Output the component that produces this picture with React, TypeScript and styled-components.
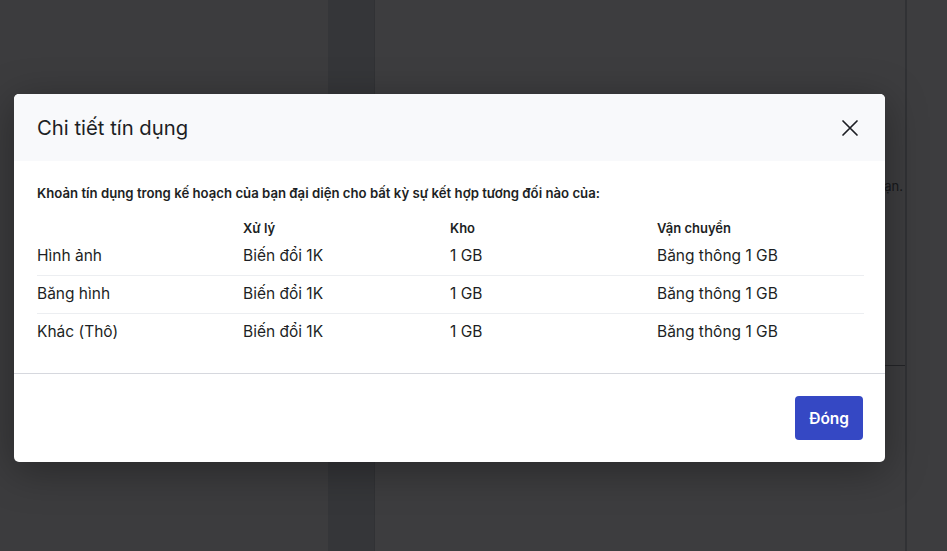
import React from 'react';
import styled, { createGlobalStyle } from 'styled-components';

const GlobalStyle = createGlobalStyle`
  html, body {
    margin: 0;
    padding: 0;
    height: 100%;
    overflow: hidden;
  }
  body {
    font-family: Inter, "Noto Sans", sans-serif;
    color: #1d1f24;
  }
  #root {
    height: 100%;
  }
`;

type Row = {
  name: string;
  processing: string;
  storage: string;
  delivery: string;
};

const rows: Row[] = [
  { name: 'Hình ảnh', processing: 'Biến đổi 1K', storage: '1 GB', delivery: 'Băng thông 1 GB' },
  { name: 'Băng hình', processing: 'Biến đổi 1K', storage: '1 GB', delivery: 'Băng thông 1 GB' },
  { name: 'Khác (Thô)', processing: 'Biến đổi 1K', storage: '1 GB', delivery: 'Băng thông 1 GB' },
];

function CloseIcon() {
  return (
    <svg width="18" height="18" viewBox="0 0 18 18" fill="none">
      <path d="M2 2L16 16M16 2L2 16" stroke="#1d1f24" strokeWidth="1.7" strokeLinecap="round" />
    </svg>
  );
}

export default function App() {
  return (
    <>
      <GlobalStyle />
      <Page>
        <LeftArea />
        <SideStrip />
        <MainArea>
          <MainText>ạn.</MainText>
          <MainRule />
        </MainArea>
        <RightArea />
        <Overlay>
          <Modal>
            <Header>
              <Title>Chi tiết tín dụng</Title>
              <CloseButton aria-label="Đóng">
                <CloseIcon />
              </CloseButton>
            </Header>
            <Body>
              <Intro>Khoản tín dụng trong kế hoạch của bạn đại diện cho bất kỳ sự kết hợp tương đối nào của:</Intro>
              <Table>
                <HeadRow>
                  <HeadCell />
                  <HeadCell>Xử lý</HeadCell>
                  <HeadCell>Kho</HeadCell>
                  <HeadCell>Vận chuyển</HeadCell>
                </HeadRow>
                {rows.map((r, i) => (
                  <DataRow key={r.name} $last={i === rows.length - 1}>
                    <Cell>{r.name}</Cell>
                    <Cell>{r.processing}</Cell>
                    <Cell>{r.storage}</Cell>
                    <Cell>{r.delivery}</Cell>
                  </DataRow>
                ))}
              </Table>
            </Body>
            <Footer>
              <PrimaryButton>Đóng</PrimaryButton>
            </Footer>
          </Modal>
        </Overlay>
      </Page>
    </>
  );
}

const Page = styled.div`
  position: relative;
  display: flex;
  width: 100%;
  height: 100%;
  background: #ffffff;
`;

const LeftArea = styled.div`
  width: 328px;
  background: #f9fafb;
`;

const SideStrip = styled.div`
  width: 46px;
  background: #d9dde0;
  border-right: 1px solid #c8cbce;
`;

const MainArea = styled.div`
  width: 530px;
  padding-top: 178px;
  border-right: 2px solid #c9ccd0;
  background: #ffffff;
`;

const MainText = styled.div`
  font-size: 13px;
  color: #55585d;
  text-align: right;
  padding-right: 2px;
`;

const MainRule = styled.div`
  margin-top: 171px;
  margin-left: auto;
  width: 40px;
  height: 1px;
  background: #8d9096;
`;

const RightArea = styled.div`
  flex: 1;
  background: #ffffff;
`;

const Overlay = styled.div`
  position: absolute;
  inset: 0;
  background: rgba(8, 8, 10, 0.785);
  padding: 94px 0 0 14px;
`;

const Modal = styled.div`
  width: 871px;
  background: #ffffff;
  border-radius: 5px;
  overflow: hidden;
  box-shadow: 0 8px 40px rgba(0, 0, 0, 0.35);
`;

const Header = styled.div`
  height: 67px;
  background: #f8f9fb;
  display: flex;
  align-items: center;
  justify-content: space-between;
  padding: 0 26px 0 23px;
  box-sizing: border-box;
`;

const Title = styled.h2`
  margin: 0;
  font-size: 20.3px;
  font-weight: 400;
  color: #1d1f24;
`;

const CloseButton = styled.button`
  border: 0;
  background: transparent;
  padding: 0;
  display: flex;
  cursor: pointer;
`;

const Body = styled.div`
  padding: 24px 21px 21px 23px;
  border-bottom: 1px solid #d6d8de;
`;

const Intro = styled.p`
  margin: 0 0 17px;
  font-size: 13.2px;
  font-weight: 600;
  color: #1d1f24;
`;

const Table = styled.div`
  display: flex;
  flex-direction: column;
`;

const gridCols = `
  display: grid;
  grid-template-columns: 206px 207px 207px 1fr;
`;

const HeadRow = styled.div`
  ${gridCols}
  height: 20px;
  align-items: center;
`;

const HeadCell = styled.div`
  font-size: 13px;
  font-weight: 600;
  color: #1d1f24;
`;

const DataRow = styled.div<{ $last?: boolean }>`
  ${gridCols}
  height: 38px;
  box-sizing: border-box;
  padding-bottom: 2px;
  align-items: center;
  border-bottom: ${(p) => (p.$last ? '1px solid transparent' : '1px solid #eceef1')};
`;

const Cell = styled.div`
  font-size: 15.5px;
  color: #1d1f24;
`;

const Footer = styled.div`
  display: flex;
  justify-content: flex-end;
  padding: 22px 22px 22px 0;
`;

const PrimaryButton = styled.button`
  height: 44px;
  padding: 0 14px;
  border: 0;
  border-radius: 4px;
  background: #3548c4;
  color: #ffffff;
  font-family: Inter, "Noto Sans", sans-serif;
  font-size: 15.5px;
  font-weight: 600;
  cursor: pointer;
`;
